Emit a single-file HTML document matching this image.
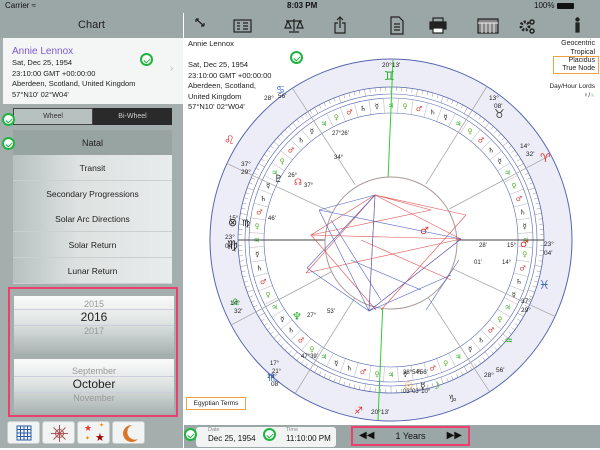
<!DOCTYPE html>
<html><head><meta charset="utf-8">
<style>
*{margin:0;padding:0;box-sizing:border-box}
body{width:600px;height:448px;overflow:hidden;font-family:"Liberation Sans","DejaVu Sans",sans-serif;background:#fff;position:relative}
.abs{position:absolute}
#status{left:0;top:0;width:600px;height:13px;background:#9ba7a6;font-size:8px;color:#111}
#lefthead{left:0;top:13px;width:183px;height:25px;background:#9ba7a6;text-align:center;font-size:11px;line-height:25px;color:#222}
#tools{left:184px;top:13px;width:416px;height:25px;background:#9ba7a6}
#side{left:0;top:38px;width:183px;height:410px;background:#a3aead}
#card{left:3px;top:38px;width:180px;height:66px;background:#f4f5f5;font-size:7.5px;line-height:10.5px;color:#222;padding:5px 9px}
.chk{width:13px;height:13px;border:2px solid #1db540;border-radius:50%;background:#fff;position:absolute}
.chk:after{content:"";position:absolute;left:3px;top:1.5px;width:3px;height:5px;border:solid #1db540;border-width:0 1.6px 1.6px 0;transform:rotate(45deg)}
.mi{position:absolute;left:13px;width:159px;height:26px;font-size:8.5px;line-height:26px;text-align:center;color:#222;background:linear-gradient(90deg,#b7c1bf,#dde2e1 40%,#e8ecec);border-bottom:1px solid #c9d0cf}
#pink{left:8px;top:287px;width:170px;height:130px;border:2px solid #ec3f6f;background:#a3aead}
.pk{position:absolute;left:4px;width:160px;background:linear-gradient(#fafbfb,#dfe4e3 45%,#a7b2b0);text-align:center;color:#222}
#bot{left:184px;top:425px;width:416px;height:23px;background:#9ba7a6}
.fld{position:absolute;top:427px;height:20px;background:#f2f3f3;border-radius:3px;font-size:8px;color:#111;padding-left:12px}
.fld span{display:block;font-size:5.5px;color:#888;line-height:7px}
.ib{position:absolute;top:421px;width:33px;height:23px;background:#f2f3f3;border:1px solid #c8cecd;border-radius:3px}
</style></head><body>
<div id="status" class="abs"><span style="position:absolute;left:5px;top:1px">Carrier ≈</span><span style="position:absolute;left:287px;top:1px;font-weight:bold">8:03 PM</span><span style="position:absolute;left:534px;top:1px">100%</span><span style="position:absolute;left:557px;top:3px;width:17px;height:6px;background:#111;border-radius:1px"></span></div>
<div id="lefthead" class="abs">Chart</div>
<div id="tools" class="abs">
<svg width="416" height="25" style="position:absolute;left:0;top:0" stroke="#222" fill="none" stroke-width="1.2">
<path d="M12 6l8 7M12 6h3M12 6v3M20 13h-3M20 13v-3"/>
<rect x="50" y="7" width="17" height="12"/><path d="M53 10h3M53 13h3M53 16h3M59 10h5M59 13h5M59 16h5"/>
<path d="M110 6v12M102 8h16M104 8l-3 7h6zM116 8l-3 7h6zM105 19h10"/>
<path d="M154 10h-3v10h10v-10h-3M156 4v11M153 7l3-3 3 3"/>
<path d="M207 4h8l4 4v13h-12zM210 11h6M210 14h6M210 17h6"/>
<rect x="246" y="9" width="16" height="7" fill="#222"/><rect x="249" y="5" width="10" height="4"/><rect x="249" y="15" width="10" height="5" fill="#fff"/>
<rect x="294" y="6" width="20" height="14" fill="#888"/><path d="M294 10h20M298 10v10M302 10v10M306 10v10M310 10v10" stroke="#ddd"/>
<circle cx="341" cy="13" r="4" stroke-width="3" stroke-dasharray="2 1.5"/><circle cx="348" cy="9" r="2" stroke-width="1.5"/><circle cx="348" cy="18" r="2" stroke-width="1.5"/>
<rect x="392" y="10" width="3" height="9" fill="#222"/><circle cx="393.5" cy="6.5" r="1.6" fill="#222"/>
</svg></div>
<div id="side" class="abs"></div>
<div id="card" class="abs"><div style="color:#7c5cd0;font-size:10px;line-height:13px;margin-top:2px">Annie Lennox</div>Sat, Dec 25, 1954<br>23:10:00 GMT +00:00:00<br>Aberdeen, Scotland, United Kingdom<br>57°N10' 02°W04'<span style="position:absolute;left:167px;top:26px;color:#bbb;font-size:10px">›</span></div>
<div class="chk" style="left:140px;top:53px"></div>
<div class="abs" style="left:13px;top:108px;width:80px;height:17px;background:#b7c1bf;border:1px solid #444;font-size:7px;color:#333;text-align:center;line-height:15px">Wheel</div>
<div class="abs" style="left:93px;top:108px;width:79px;height:17px;background:#2a2a2a;font-size:7px;color:#ccc;text-align:center;line-height:17px">Bi-Wheel</div>
<div class="mi" style="top:130px;background:#98a4a2;border:none;font-size:9px">Natal</div>
<div class="mi" style="top:155px">Transit</div>
<div class="mi" style="top:181px">Secondary Progressions</div>
<div class="mi" style="top:206px">Solar Arc Directions</div>
<div class="mi" style="top:232px">Solar Return</div>
<div class="mi" style="top:258px">Lunar Return</div>
<div class="chk" style="left:2px;top:113px"></div>
<div class="chk" style="left:2px;top:137px"></div>
<div id="pink" class="abs">
<div class="pk" style="top:7px;height:58px"><div style="font-size:9px;color:#999;margin-top:3px">2015</div><div style="font-size:12px;border-top:1px solid #ccd;border-bottom:1px solid #ccd;line-height:15px">2016</div><div style="font-size:9px;color:#999">2017</div></div>
<div class="pk" style="top:70px;height:55px"><div style="font-size:9px;color:#999;margin-top:7px">September</div><div style="font-size:12px;border-top:1px solid #ccd;border-bottom:1px solid #ccd;line-height:15px">October</div><div style="font-size:9px;color:#999">November</div></div>
</div>
<div class="ib" style="left:7px"><svg width="33" height="23"><g stroke="#2a5ca8" fill="none"><rect x="9" y="4" width="14" height="14"/><path d="M9 7.5h14M9 11h14M9 14.5h14M12.5 4v14M16 4v14M19.5 4v14"/></g></svg></div>
<div class="ib" style="left:42px"><svg width="33" height="23"><g stroke="#a55" fill="none"><circle cx="16.5" cy="11.5" r="4"/><path d="M16.5 3v17M8 11.5h17M10.5 5.5l12 12M22.5 5.5l-12 12"/></g></svg></div>
<div class="ib" style="left:77px"><span style="position:absolute;left:6px;top:1px;color:#e33;font-size:9px">★</span><span style="position:absolute;left:17px;top:9px;color:#900;font-size:11px">★</span><span style="position:absolute;left:21px;top:0;color:#e80;font-size:6px">✦</span><span style="position:absolute;left:7px;top:13px;color:#e80;font-size:6px">✦</span></div>
<div class="ib" style="left:112px"><svg width="33" height="23"><path d="M19 3a8.5 8.5 0 1 0 6 14a7 7 0 0 1-6-14z" fill="#d9762a"/></svg></div>

<div class="abs" style="left:188px;top:39px;font-size:7.5px;line-height:10.5px;color:#222">Annie Lennox<br><br>Sat, Dec 25, 1954<br>23:10:00 GMT +00:00:00<br>Aberdeen, Scotland,<br>United Kingdom<br>57°N10' 02°W04'</div>
<div class="chk" style="left:290px;top:51px"></div>
<div class="abs" style="right:5px;top:39px;font-size:7px;line-height:9px;text-align:right;color:#222">Geocentric<br>Tropical</div>
<div class="abs" style="left:553px;top:56px;width:46px;height:18px;border:1px solid #f0a040;font-size:7px;line-height:8px;text-align:right;padding-right:3px;color:#222">Placidus<br>True Node</div>
<div class="abs" style="right:5px;top:82px;font-size:6.5px;line-height:9px;text-align:right;color:#222">Day/Hour Lords<br>♀/<span style="color:#2a2">♄</span></div>
<div class="abs" style="left:186px;top:397px;width:60px;height:13px;border:1px solid #f0a040;font-size:6.5px;line-height:11px;text-align:center;color:#222">Egyptian Terms</div>

<svg class="abs" style="left:184px;top:38px" width="416" height="387" id="wh">
<g transform="translate(207,202)">
<circle r="181" fill="#ededf7" stroke="#5566b0" stroke-width="1"/>
<circle r="153" fill="#fff" stroke="#5566b0" stroke-width="0.8"/>
<circle r="146" fill="none" stroke="#5566b0" stroke-width="0.6"/>
<circle r="142" fill="none" stroke="#5566b0" stroke-width="0.6"/>
<circle r="127" fill="none" stroke="#5566b0" stroke-width="0.6"/>
<g id="ticks" stroke="#777" stroke-width="0.4"></g>
<g id="cusps" stroke="#aaa" stroke-width="0.8"></g>
<g id="pl" font-size="7" font-family="DejaVu Sans" text-anchor="middle"></g>
<line x1="-153" y1="0" x2="153" y2="0" stroke="#444" stroke-width="1"/>
<line x1="2" y1="-180" x2="-13" y2="180" stroke="#3c3" stroke-width="1"/>
<circle r="66" cy="3" fill="#fff" stroke="#a99" stroke-width="1"/>
<g stroke="#e05050" stroke-width="0.6" fill="none">
<path d="M-16-45L70 -1L-22 71L-16-45M-16-45L-85 33M-16-45L-80-5L70-1M-80-5L-15 70M-85 33L70 -1M-80-5L40-30L-16-45M-16-45L75-25L-10 70M-30 0L60 40"/>
</g>
<g stroke="#5060c0" stroke-width="0.6" fill="none">
<path d="M-16-45L-22 71M-16-45L-72-30M-72-30L-22 71M-72-30L70-1M-22 71L70 -1M-84 28L-22 71M-60-20L-10 60M-22 71L60 35M-40 20L30 50M-84 28L-16-45M35 70L68 20"/>
</g>
</g>
<g font-size="6.5" fill="#222">
<text x="198" y="29">20°13'</text><text x="187" y="376">20°13'</text>
<text x="57" y="128">37°</text><text x="57" y="136">29°</text>
<text x="41" y="201">23°</text><text x="41" y="210">04'</text>
<text x="360" y="208">23°</text><text x="360" y="217">04'</text>
<text x="337" y="265">37°</text><text x="337" y="274">29°</text>
<text x="46" y="267">14°</text><text x="50" y="275">32'</text>
<text x="305" y="62">13°</text><text x="310" y="70">08'</text>
<text x="80" y="62">28°</text><text x="94" y="60">56'</text>
<text x="336" y="110">14°</text><text x="342" y="118">32'</text>
<text x="83" y="340">13°</text><text x="87" y="348">08'</text>
<text x="300" y="339">28°</text><text x="312" y="334">56'</text>
<text x="45" y="182" font-size="6">15°</text><text x="84" y="182" font-size="6">46'</text>
<text x="104" y="139" font-size="6">26°</text><text x="120" y="149" font-size="6">37°</text>
<text x="123" y="279" font-size="6">27°</text><text x="143" y="275" font-size="6">53'</text>
<text x="117" y="320" font-size="6">47°39'</text><text x="86" y="327" font-size="6">17°</text><text x="88" y="335" font-size="6">21°</text>
<text x="219" y="336" font-size="6">38°54'56'</text><text x="219" y="355" font-size="6">03°03°10°</text>
<text x="295" y="209" font-size="6">28'</text><text x="323" y="209" font-size="6">15°</text>
<text x="290" y="226" font-size="6">01'</text><text x="318" y="226" font-size="6">14°</text>
<text x="148" y="97" font-size="6">27°26'</text><text x="150" y="121" font-size="6">34°</text>
</g>
<g font-size="12" font-family="DejaVu Sans">
<text x="200" y="42" fill="#2a2">♊</text><text x="92" y="55" fill="#36c" font-size="10">♋</text>
<text x="40" y="106" fill="#d33">♌</text><text x="43" y="211" fill="#222">♍</text><text x="47" y="267" fill="#2a2" font-size="10">♎</text>
<text x="84" y="343" fill="#36c" font-size="10">♏</text><text x="170" y="376" fill="#d33" font-size="10">♐</text>
<text x="264" y="364" fill="#444" font-size="10">♑</text><text x="320" y="306" fill="#2a2" font-size="10">♒</text>
<text x="355" y="251" fill="#36c">♓</text><text x="356" y="124" fill="#d33">♈</text><text x="310" y="80" fill="#444">♉</text>
<text x="44" y="188" fill="#222" font-size="11">⊗</text><text x="58" y="188" font-size="9" fill="#222">♍</text>
<text x="90" y="144" font-size="10" fill="#222">♇</text><text x="110" y="147" font-size="9" fill="#d33">☊</text>
<text x="108" y="282" font-size="11" fill="#2a2">♆</text>
<text x="236" y="196" font-size="10" fill="#d33">♂</text><text x="336" y="209" font-size="10" fill="#d33">♂</text>
<text x="220" y="351" font-size="10" fill="#e70">☉</text><text x="236" y="351" font-size="9" fill="#222">☿</text><text x="247" y="351" font-size="10" fill="#2a2">☽</text>
</g>
</svg>
<script>
var t=document.getElementById('ticks'),c=document.getElementById('cusps'),p=document.getElementById('pl'),s='';
for(var i=0;i<360;i+=2){var a=i*Math.PI/180,r1=(i%10==0)?146:149;s+='<line x1="'+(r1*Math.cos(a)).toFixed(1)+'" y1="'+(r1*Math.sin(a)).toFixed(1)+'" x2="'+(153*Math.cos(a)).toFixed(1)+'" y2="'+(153*Math.sin(a)).toFixed(1)+'"/>';}
for(var i=0;i<360;i+=6){var a=(i+3)*Math.PI/180;s+='<line x1="'+(127*Math.cos(a)).toFixed(1)+'" y1="'+(127*Math.sin(a)).toFixed(1)+'" x2="'+(142*Math.cos(a)).toFixed(1)+'" y2="'+(142*Math.sin(a)).toFixed(1)+'" stroke="#99a"/>';}
t.innerHTML=s;s='';
[28,58,123,155,208,238,303,335].forEach(function(d){var a=-d*Math.PI/180;s+='<line x1="'+(66*Math.cos(a)).toFixed(1)+'" y1="'+(66*Math.sin(a)).toFixed(1)+'" x2="'+(181*Math.cos(a)).toFixed(1)+'" y2="'+(181*Math.sin(a)).toFixed(1)+'"/>';});
c.innerHTML=s;s='';
var g=[['♀','#5a2'],['♂','#d33'],['♄','#222'],['☿','#222'],['♃','#2a2']];
for(var i=0,k=0;i<360;i+=6,k++){var a=(i+6)*Math.PI/180,q=g[k%5];s+='<text x="'+(134.5*Math.cos(a)).toFixed(1)+'" y="'+(134.5*Math.sin(a)+2.5).toFixed(1)+'" fill="'+q[1]+'">'+q[0]+'</text>';}
p.innerHTML=s;
</script>
<div id="bot" class="abs"></div>
<div class="fld" style="left:196px;width:82px"><span>Date</span>Dec 25, 1954</div>
<div class="fld" style="left:274px;width:62px"><span>Time</span>11:10:00 PM</div>
<div class="chk" style="left:184px;top:428px"></div>
<div class="chk" style="left:263px;top:428px"></div>
<div class="abs" style="left:351px;top:426px;width:119px;height:20px;border:2px solid #ec3f6f;font-size:9px;line-height:16px;text-align:center;color:#111"><span style="position:absolute;left:6px;font-size:10px">◀◀</span>1 Years<span style="position:absolute;right:6px;font-size:10px">▶▶</span></div>
</body></html>
